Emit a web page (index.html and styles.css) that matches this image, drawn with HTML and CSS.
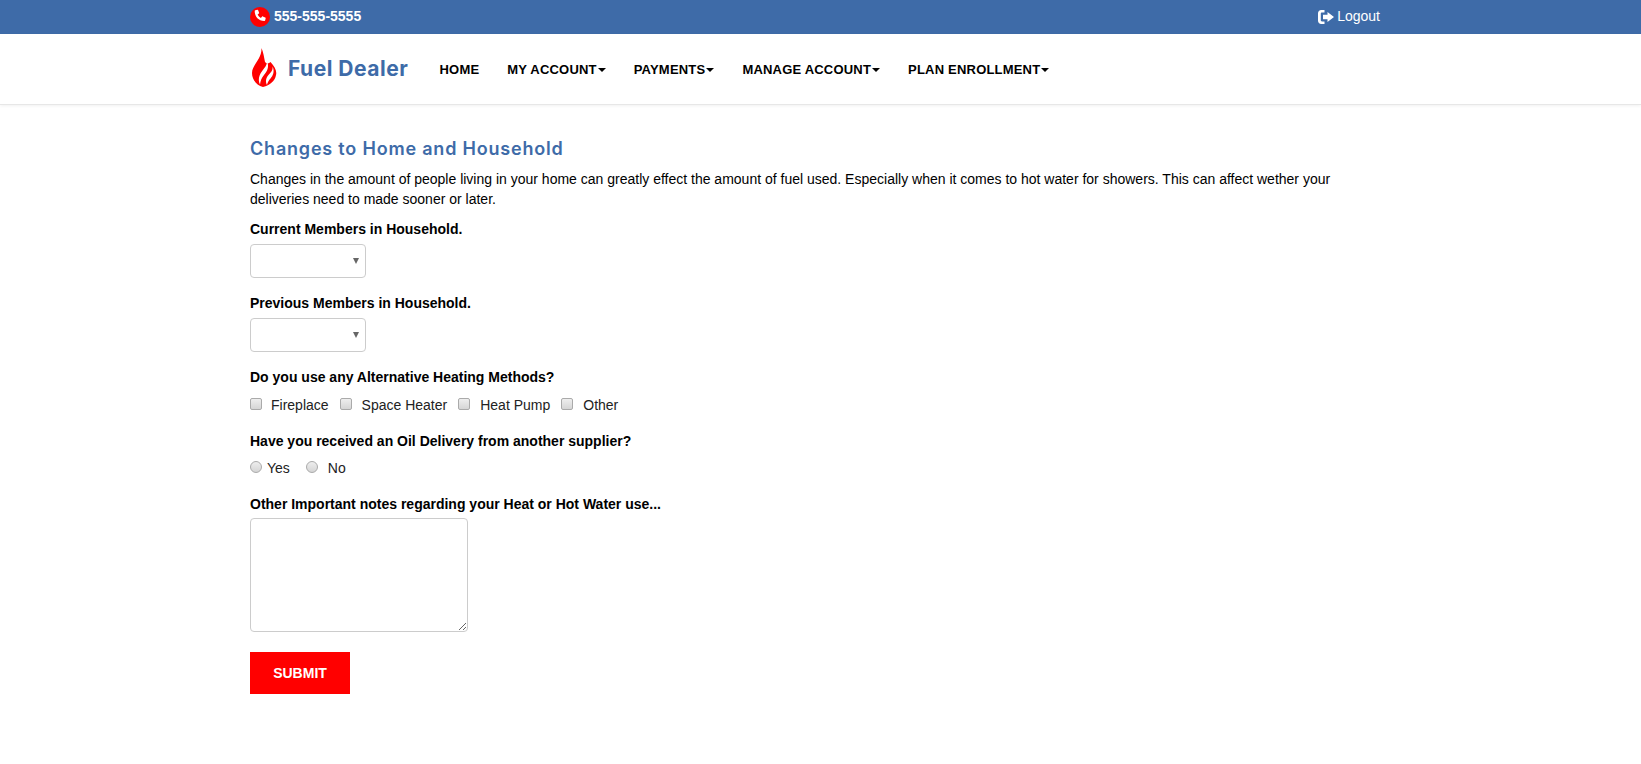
FILE: index.html
```html
<!DOCTYPE html>
<html lang="en">

<head>
  <meta charset="UTF-8">
  <meta name="viewport" content="width=device-width, initial-scale=1.0">
  <title>Fuel Dealer</title>
  <link rel="stylesheet" href="styles.css">
</head>

<body>

  <div class="topbar">
    <div class="container topbar-inner">
      <a class="phone" href="#">
        <span class="phone-icon">
          <svg viewBox="0 0 20 20" width="16" height="16">
            <path fill="#fff" d="M4.200 1.600 6.600 1c.5-.1.900.1 1.100.6l1.200 3c.2.400.1.800-.3 1.100L7 7c.9 1.900 2.300 3.300 4.100 4.200l1.300-1.600c.3-.4.700-.5 1.100-.3l3 1.200c.5.2.7.600.6 1.100l-.6 2.500c-.1.500-.5.800-1 .8C8.300 14.900 3.400 10 3.400 2.600c0-.5.300-.9.800-1z" />
          </svg>
        </span>
        555-555-5555
      </a>
      <a class="logout" href="#">
        <svg viewBox="0 0 16 14" width="16" height="14">
          <path fill="#fff" d="M6.500 0v2.500H4C3.200 2.500 2.800 3 2.800 3.700v6.600c0 .7.400 1.200 1.200 1.200h2.500V14H3.200C1.400 14 0 12.600 0 10.800V3.200C0 1.400 1.400 0 3.200 0z" />
          <path fill="#fff" d="M9.500 2 16 7l-6.500 5V9.300H5V4.700h4.500z" />
        </svg>
        Logout
      </a>
    </div>
  </div>

  <div class="header">
    <div class="container header-inner">
      <a class="logo" href="#">
        <svg class="flame" viewBox="0 0 25 39" width="25" height="39">
          <path fill="#f00" d="M9.500 0C11.500 5 12 9 13 14c1.500 2 4 1.500 5.500 0C23 19 25 23 24 27c-1 6-6 10-13 12C4 37 0 31 0 25 0 17 10 11 9.500 0z" />
          <path fill="#fff" d="M8 36.500C5 30 8.500 25 12 20.500c2.500-3 3-5 3-7.500 2.500 6 .2 10-3 14-2.500 3-3.600 6-4 9.500z" />
          <path fill="#fff" d="M15 37c-2.500-5 .2-9 3.200-12 2-2 2.500-4 2.500-6.500 2 5.500.3 9-2.200 12-2 2.200-3 4.200-3.500 6.500z" />
        </svg>
        <span class="logo-text">Fuel Dealer</span>
      </a>
      <ul class="nav">
        <li><a href="#">HOME</a></li>
        <li><a href="#">MY ACCOUNT<b class="caret"></b></a></li>
        <li><a href="#">PAYMENTS<b class="caret"></b></a></li>
        <li><a href="#">MANAGE ACCOUNT<b class="caret"></b></a></li>
        <li><a href="#">PLAN ENROLLMENT<b class="caret"></b></a></li>
      </ul>
    </div>
  </div>

  <div class="container content">
    <h2 class="title">Changes to Home and Household</h2>
    <p class="intro">Changes in the amount of people living in your home can greatly effect the amount of fuel used. Especially when it comes to hot water for showers. This can affect wether your deliveries need to made sooner or later.</p>

    <form>
      <div class="field">
        <label class="field-label">Current Members in Household.</label>
        <div class="select-box"><span class="select-arrow"></span></div>
      </div>

      <div class="field">
        <label class="field-label">Previous Members in Household.</label>
        <div class="select-box"><span class="select-arrow"></span></div>
      </div>

      <div class="field">
        <label class="field-label">Do you use any Alternative Heating Methods?</label>
        <div class="options">
          <label class="option"><span class="check"></span>Fireplace</label>
          <label class="option"><span class="check"></span>Space Heater</label>
          <label class="option"><span class="check"></span>Heat Pump</label>
          <label class="option"><span class="check"></span>Other</label>
        </div>
      </div>

      <div class="field">
        <label class="field-label">Have you received an Oil Delivery from another supplier?</label>
        <div class="options radios">
          <label class="option"><span class="radio"></span>Yes</label>
          <label class="option option-no"><span class="radio"></span>No</label>
        </div>
      </div>

      <div class="field">
        <label class="field-label notes-label">Other Important notes regarding your Heat or Hot Water use...</label>
        <textarea class="notes"></textarea>
      </div>

      <button class="submit" type="button">SUBMIT</button>
    </form>
  </div>

</body>

</html>
```

FILE: styles.css
```css
* {
  margin: 0;
  padding: 0;
  box-sizing: border-box;
}

body {
  font-family: "Liberation Sans", Arial, sans-serif;
  font-size: 14px;
  line-height: 21px;
  color: #000;
  background: #fff;
}

a {
  color: inherit;
  text-decoration: none;
}

.container {
  width: 1141px;
  margin-left: 250px;
}

.topbar {
  background: #3e6ba8;
  height: 34px;
  color: #fff;
}

.topbar-inner {
  height: 33px;
  display: flex;
  justify-content: space-between;
  align-items: center;
}

.phone {
  display: flex;
  align-items: center;
  font-weight: bold;
  font-size: 14px;
}

.phone-icon {
  width: 20px;
  height: 20px;
  border-radius: 50%;
  background: #f00;
  margin-right: 4px;
  display: flex;
  align-items: center;
  justify-content: center;
}

.logout {
  display: flex;
  align-items: center;
  gap: 3px;
  font-size: 14px;
  margin-right: 11px;
  margin-left: auto;
}

.header {
  height: 71px;
  background: #fff;
  border-bottom: 1px solid #e7e7e7;
  box-shadow: 0 1px 3px rgba(0, 0, 0, 0.06);
}

.header-inner {
  height: 69px;
  display: flex;
  align-items: center;
}

.logo {
  display: flex;
  align-items: center;
  width: 189.500px;
  margin-top: -1px;
}

.flame {
  margin-left: 2px;
  margin-right: 11px;
  margin-top: -2px;
}

.logo-text {
  font-family: Inter, "Open Sans", sans-serif;
  font-weight: 700;
  font-size: 21px;
  letter-spacing: 0.5px;
  color: #3e6ba8;
}

.nav {
  display: flex;
  list-style: none;
  gap: 28px;
  margin-top: 2px;
}

.nav a {
  font-weight: bold;
  font-size: 13px;
  letter-spacing: 0.2px;
  color: #000;
  display: flex;
  align-items: center;
}

.caret {
  display: inline-block;
  width: 0;
  height: 0;
  margin-left: 1px;
  border-top: 4px solid #000;
  border-left: 4px solid transparent;
  border-right: 4px solid transparent;
}

.content {
  padding-top: 32px;
}

.title {
  font-family: Inter, "Open Sans", sans-serif;
  font-weight: 600;
  font-size: 18px;
  line-height: 24px;
  letter-spacing: 0.8px;
  color: #3e6ba8;
  margin-bottom: 8px;
}

.intro {
  width: 1100px;
  line-height: 20px;
  margin-bottom: 10px;
}

.field {
  margin-bottom: 15px;
}

.field-label {
  display: block;
  font-weight: bold;
  line-height: 21px;
  margin-bottom: 4px;
}

.notes-label {
  margin-bottom: 3px;
}

.select-box {
  width: 116px;
  height: 34px;
  border: 1px solid #ccc;
  border-radius: 4px;
  display: flex;
  justify-content: flex-end;
  align-items: center;
  padding-right: 6px;
}

.select-arrow {
  width: 0;
  height: 0;
  border-top: 6px solid #666;
  border-left: 3px solid transparent;
  border-right: 3px solid transparent;
}

.options {
  display: flex;
  gap: 11px;
  line-height: 21px;
  padding-top: 3px;
  color: #222;
}

.option {
  display: flex;
  align-items: center;
}

.check {
  width: 12px;
  height: 12px;
  margin-right: 10px;
  margin-top: -3px;
  border: 1px solid #aaa;
  border-radius: 2px;
  background: linear-gradient(#eee, #d5d5d5);
}

.option:first-child .check {
  margin-right: 9px;
}

.radio {
  width: 12px;
  height: 12px;
  margin-right: 5px;
  margin-top: -3px;
  border: 1px solid #aaa;
  border-radius: 50%;
  background: linear-gradient(#eee, #d5d5d5);
}

.radios {
  gap: 16px;
  padding-top: 2px;
}

.option-no .radio {
  margin-right: 10px;
}

.notes {
  display: block;
  width: 218px;
  height: 114px;
  border: 1px solid #ccc;
  border-radius: 4px;
  resize: both;
  outline: none;
}

.submit {
  display: block;
  width: 100px;
  height: 42px;
  margin-top: 20px;
  background: #f00;
  color: #fff;
  border: none;
  font-family: "Liberation Sans", Arial, sans-serif;
  font-weight: bold;
  font-size: 14px;
}
```
